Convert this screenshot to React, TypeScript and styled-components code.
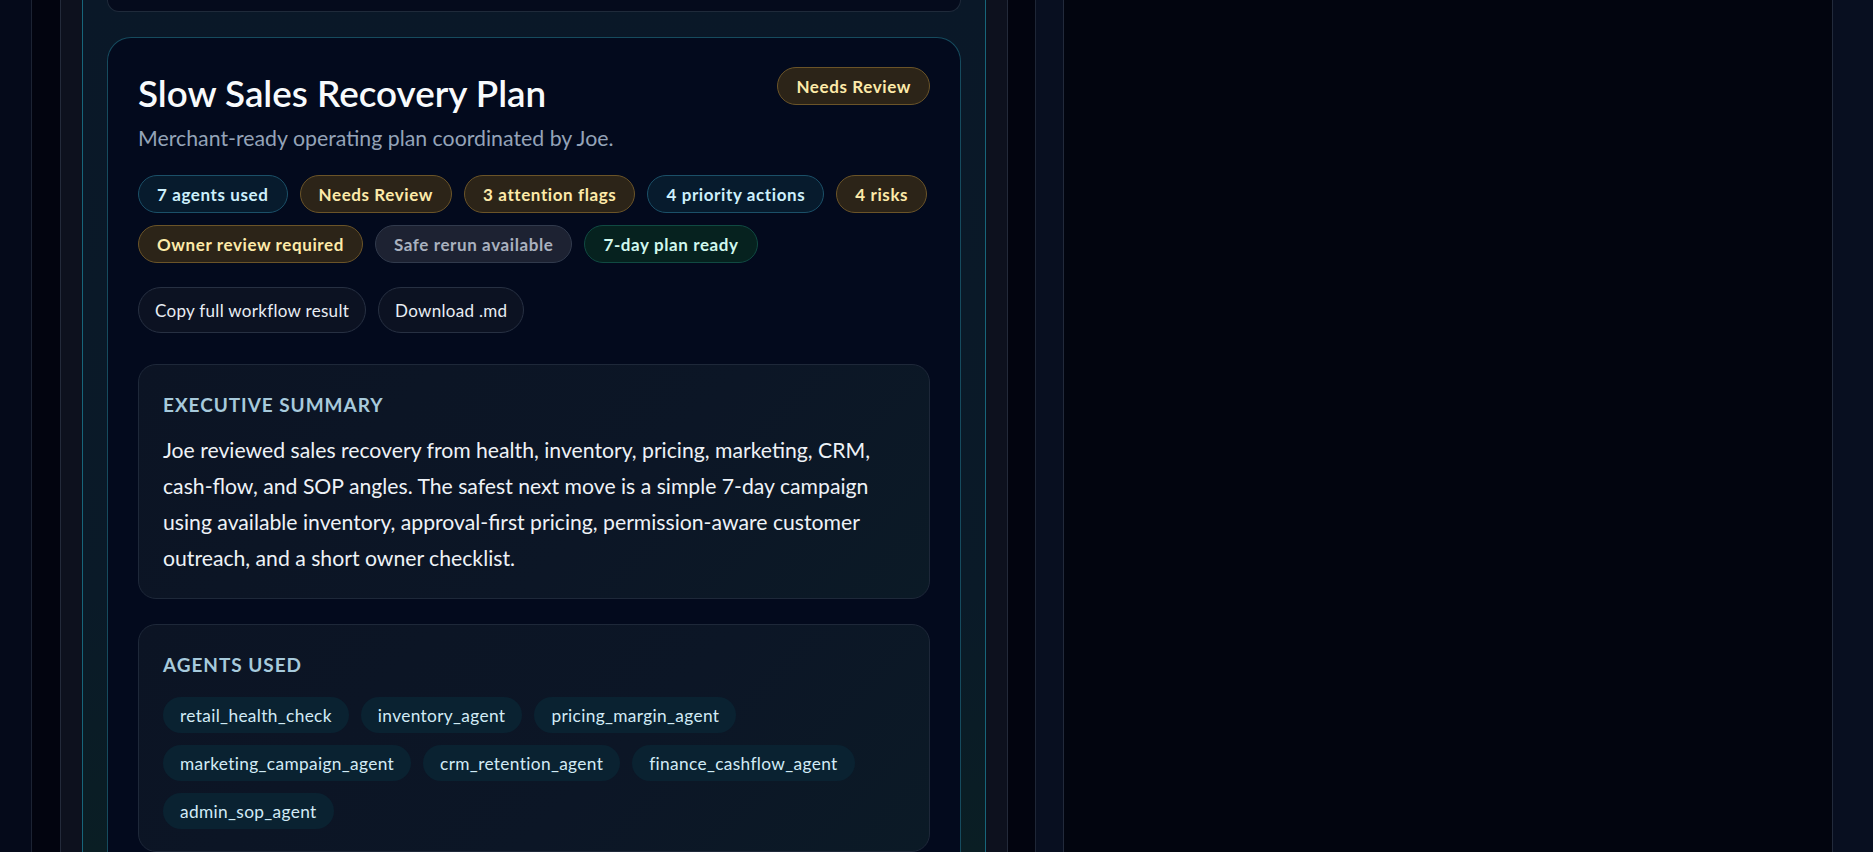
import React from "react";
import styled, { createGlobalStyle } from "styled-components";

const GlobalStyle = createGlobalStyle`
  * { box-sizing: border-box; }
  html, body { margin: 0; padding: 0; height: 100%; }
  body {
    background: #050a1a;
    font-family: "Lato", "Open Sans", sans-serif;
    color: #e2e8f0;
    overflow: hidden;
  }
  #root { height: 100%; }
`;

const Page = styled.div`
  display: flex;
  height: 852px;
  padding-left: 31px;
  background: #050a1a;
  overflow: hidden;
`;

const Workspace = styled.div`
  flex: 1;
  display: flex;
  padding-left: 28px;
  gap: 27px;
  border-left: 1px solid #1c2333;
  background: #02040f;
`;

const MainColumn = styled.div`
  width: 948px;
  flex: none;
  display: flex;
  padding: 0 21px;
  background: #0d111e;
  border-left: 1px solid #232a3a;
  border-right: 1px solid #232a3a;
`;

const ResultPanel = styled.section`
  flex: 1;
  display: flex;
  flex-direction: column;
  padding: 0 24px;
  background: linear-gradient(180deg, #0a1828 0%, #0a1a28 70%, #0a1e24 100%);
  border-left: 1px solid #17657a;
  border-right: 1px solid #17657a;
`;

const PrevCardTail = styled.div`
  height: 12px;
  flex: none;
  background: #050b1c;
  border: 1px solid #1f2a3a;
  border-top: none;
  border-radius: 0 0 24px 24px;
`;

const PlanCard = styled.article`
  margin-top: 25px;
  flex: none;
  padding: 29px 30px 0;
  background: #030a1d;
  border: 1px solid #164b5e;
  border-bottom: none;
  border-radius: 24px 24px 0 0;
  display: flex;
  flex-direction: column;
`;

const HeaderRow = styled.div`
  display: flex;
  justify-content: space-between;
  align-items: flex-start;
  gap: 16px;
`;

const TitleBlock = styled.div`
  display: flex;
  flex-direction: column;
`;

const Title = styled.h1`
  margin: 0;
  font-size: 36.8px;
  line-height: 52px;
  font-weight: 600;
  color: #f8fafc;
`;

const Subtitle = styled.p`
  margin: 5px 0 0;
  font-size: 21.3px;
  line-height: 28px;
  color: #94a3b8;
`;

type Tone = "blue" | "amber" | "gray" | "green";

const toneStyles: Record<Tone, { bg: string; border: string; color: string }> = {
  blue: { bg: "#071b2d", border: "#1b5068", color: "#cdf0fc" },
  amber: { bg: "#2c2418", border: "#6b5428", color: "#fdeaa9" },
  gray: { bg: "#1d2232", border: "#313a4c", color: "#a9b1bf" },
  green: { bg: "#06221f", border: "#104a42", color: "#d0f8ee" },
};

const Badge = styled.span<{ $tone: Tone }>`
  display: inline-flex;
  align-items: center;
  height: 38px;
  padding: 0 18px;
  border-radius: 999px;
  font-size: 17px;
  font-weight: 700;
  letter-spacing: 0.6px;
  white-space: nowrap;
  background: ${(p) => toneStyles[p.$tone].bg};
  border: 1px solid ${(p) => toneStyles[p.$tone].border};
  color: ${(p) => toneStyles[p.$tone].color};
`;

const BadgeRow = styled.div`
  display: flex;
  flex-wrap: wrap;
  gap: 12px;
  margin-top: 23px;
`;

const ActionRow = styled.div`
  display: flex;
  gap: 12px;
  margin-top: 24px;
`;

const ActionButton = styled.button`
  height: 46px;
  padding: 0 16px;
  border-radius: 999px;
  background: #0c1222;
  border: 1px solid #273042;
  color: #e8edf4;
  font-family: inherit;
  font-size: 17px;
  letter-spacing: 0.3px;
  font-weight: 400;
  cursor: pointer;
`;

const Section = styled.section<{ $gap: number }>`
  margin-top: ${(p) => p.$gap}px;
  padding: 27px 20px 22px 24px;
  border-radius: 18px;
  border: 1px solid #1e2839;
  background: linear-gradient(135deg, #0c1424 0%, #0c1626 60%, #0b1a26 100%);
`;

const SectionLabel = styled.h2`
  margin: 0;
  font-size: 19px;
  line-height: 26px;
  font-weight: 700;
  letter-spacing: 0.05em;
  color: #a7cadc;
  text-transform: uppercase;
`;

const SummaryText = styled.p`
  margin: 14px 0 0;
  font-size: 21.2px;
  line-height: 36px;
  color: #eef2f7;
`;

const ChipList = styled.div`
  display: flex;
  flex-wrap: wrap;
  gap: 12px;
  margin-top: 19px;
`;

const Chip = styled.span`
  display: inline-flex;
  align-items: center;
  height: 36px;
  padding: 0 17px;
  border-radius: 999px;
  background: #0a2231;
  color: #d2ebf6;
  font-size: 17.3px;
  letter-spacing: 0.35px;
`;

const SideColumn = styled.aside`
  flex: 1;
  display: flex;
  padding: 0 40px 0 27px;
  background: #080f20;
  border-left: 1px solid #1e2636;
`;

const SidePanel = styled.div`
  flex: 1;
  background: #02050f;
  border-left: 1px solid #222a3b;
  border-right: 1px solid #222a3b;
`;

const agents = [
  "retail_health_check",
  "inventory_agent",
  "pricing_margin_agent",
  "marketing_campaign_agent",
  "crm_retention_agent",
  "finance_cashflow_agent",
  "admin_sop_agent",
];

const badges: { label: string; tone: Tone }[] = [
  { label: "7 agents used", tone: "blue" },
  { label: "Needs Review", tone: "amber" },
  { label: "3 attention flags", tone: "amber" },
  { label: "4 priority actions", tone: "blue" },
  { label: "4 risks", tone: "amber" },
  { label: "Owner review required", tone: "amber" },
  { label: "Safe rerun available", tone: "gray" },
  { label: "7-day plan ready", tone: "green" },
];

export default function App() {
  return (
    <>
      <GlobalStyle />
      <Page>
        <Workspace>
          <MainColumn>
            <ResultPanel>
              <PrevCardTail />
              <PlanCard>
                <HeaderRow>
                  <TitleBlock>
                    <Title>Slow Sales Recovery Plan</Title>
                    <Subtitle>Merchant-ready operating plan coordinated by Joe.</Subtitle>
                  </TitleBlock>
                  <Badge $tone="amber">Needs Review</Badge>
                </HeaderRow>
                <BadgeRow>
                  {badges.map((b) => (
                    <Badge key={b.label} $tone={b.tone}>
                      {b.label}
                    </Badge>
                  ))}
                </BadgeRow>
                <ActionRow>
                  <ActionButton>Copy full workflow result</ActionButton>
                  <ActionButton>Download .md</ActionButton>
                </ActionRow>
                <Section $gap={31}>
                  <SectionLabel>Executive Summary</SectionLabel>
                  <SummaryText>
                    Joe reviewed sales recovery from health, inventory, pricing, marketing, CRM,
                    cash-flow, and SOP angles. The safest next move is a simple 7-day campaign
                    using available inventory, approval-first pricing, permission-aware customer
                    outreach, and a short owner checklist.
                  </SummaryText>
                </Section>
                <Section $gap={25}>
                  <SectionLabel>Agents Used</SectionLabel>
                  <ChipList>
                    {agents.map((a) => (
                      <Chip key={a}>{a}</Chip>
                    ))}
                  </ChipList>
                </Section>
              </PlanCard>
            </ResultPanel>
          </MainColumn>
          <SideColumn>
            <SidePanel />
          </SideColumn>
        </Workspace>
      </Page>
    </>
  );
}
